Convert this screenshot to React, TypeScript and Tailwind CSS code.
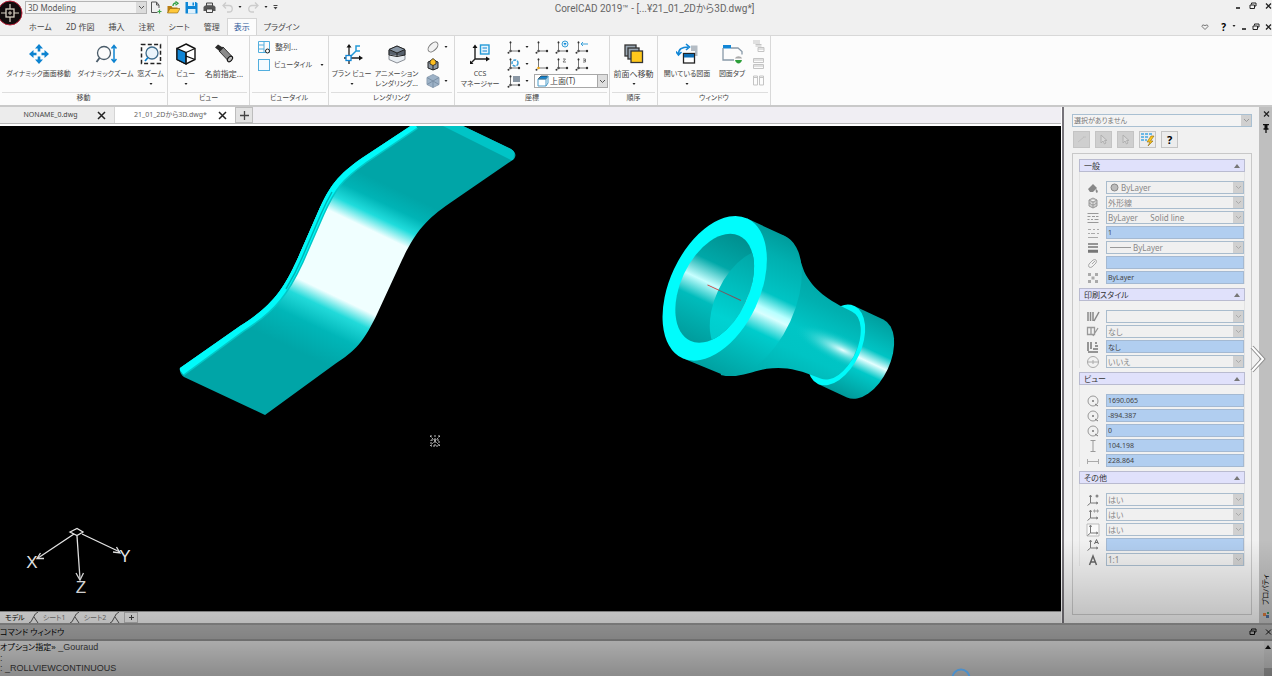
import type { ReactNode } from 'react';

const FONT = "font-['Noto_Sans','Noto_Sans_CJK_JP',sans-serif]";

type SvgProps = { size?: number; children: ReactNode };

const Svg = ({ size = 22, children }: SvgProps) => (
  <svg width={size} height={size} viewBox={`0 0 ${size} ${size}`} fill="none" className="shrink-0">
    {children}
  </svg>
);

/* ---------- ribbon icons ---------- */

const PanIcon = () => (
  <Svg>
    <path
      d="M11 1l4 4.500h-2.700v3h-2.600v-3H7zM11 21l4-4.500h-2.700v-3h-2.600v3H7zM1 11l4.500-4v2.700h3v2.600h-3V15zM21 11l-4.500-4v2.700h-3v2.600h3V15z"
      fill="#0d83d0"
    />
  </Svg>
);

const ZoomIcon = () => (
  <Svg>
    <circle cx="9" cy="10" r="6.500" stroke="#4a5c6a" strokeWidth="1.300" />
    <path d="M4.500 15L1.500 19" stroke="#4a5c6a" strokeWidth="1.800" />
    <path d="M19 3v15M16.500 5.500L19 2.500l2.500 3M16.500 16L19 19l2.500-3" stroke="#0d83d0" strokeWidth="1.500" />
  </Svg>
);

const ZoomWindowIcon = () => (
  <Svg>
    <rect x="1.500" y="1.500" width="19" height="19" stroke="#222" strokeWidth="1.500" strokeDasharray="4 2.300" />
    <circle cx="12" cy="10" r="6" fill="#eaf4fb" stroke="#3f6c8c" strokeWidth="1.300" />
    <path d="M8 14.500L5 18" stroke="#0d83d0" strokeWidth="1.800" />
  </Svg>
);

const CubeIcon = () => (
  <Svg>
    <path d="M11 1l9 4.500v11L11 21l-9-4.500v-11z" fill="#fff" stroke="#111" strokeWidth="1.400" />
    <path d="M2 5.500L11 9.500V21l-9-4.500z" fill="#1186d6" stroke="#111" strokeWidth="1.200" />
    <path d="M11 9.500l9-4M11 9.500V13l9 3.500M11 13v8" stroke="#111" strokeWidth="1.200" />
  </Svg>
);

const FlashlightIcon = () => (
  <Svg>
    <path d="M8 5.500l2-1.500 9 9.500-4 4L6 8z" fill="#8a8a8a" stroke="#333" />
    <path d="M2 4.500L5 1.500l5.500 3.500L7 8.500z" fill="#2a2a2a" />
    <ellipse cx="17" cy="16" rx="2" ry="3.200" transform="rotate(42 17 16)" fill="#bbb" stroke="#111" />
  </Svg>
);

const PlanViewIcon = () => (
  <Svg>
    <path d="M8 3v18M3 15h17" stroke="#222" strokeWidth="1.300" />
    <path d="M5.500 4.500L8 1l2.500 3.500zM18 12.500l4 2.500-4 2.500z" fill="#111" />
    <path d="M9 14l6-6M19 3h-4v5h4" stroke="#259bd8" strokeWidth="1.500" />
    <rect x="5" y="12.500" width="5" height="5" fill="#fff" stroke="#1186d6" strokeWidth="1.300" />
  </Svg>
);

const RenderIcon = () => (
  <Svg>
    <path d="M11 3l8 3.500v10L11 20l-8-3.500v-10z" fill="#e8edf2" stroke="#8a8f96" />
    <path d="M3 6.500L11 3l8 3.500v6l-8 0-8-1z" fill="#56606c" />
    <path d="M3 6.500L11 10l8-3.500L11 3z" fill="#8896a5" stroke="#222" />
    <path d="M11 10v3M3 7v5l8 1.500 8-1.500V7" stroke="#222" />
  </Svg>
);

const CcsIcon = () => (
  <Svg>
    <path d="M6 3v13h12M6 16l-4 4" stroke="#222" strokeWidth="1.400" />
    <path d="M3.500 5L6 1.500 8.500 5zM17 13.500l4 2.500-4 2.500zM1 17.500V21h3.500z" fill="#111" />
    <rect x="11.500" y="2" width="8.500" height="9" fill="#e7f5fd" stroke="#259bd8" strokeWidth="1.400" />
    <path d="M13.500 5h4.500M13.500 8h4.500" stroke="#1186d6" strokeWidth="1.200" />
  </Svg>
);

const OrderIcon = () => (
  <Svg>
    <rect x="2" y="2" width="11" height="11" fill="#9aa7b3" stroke="#333" strokeWidth="1.300" />
    <rect x="5" y="5" width="11" height="11" fill="#9aa7b3" stroke="#333" strokeWidth="1.300" />
    <rect x="8" y="8" width="11.500" height="11.500" fill="#ffc81c" stroke="#333" strokeWidth="1.300" />
  </Svg>
);

const OpenDrawingsIcon = () => (
  <Svg>
    <path d="M15 2.500h6.500V13H19V8h-4z" fill="#b4bcc4" />
    <path d="M2.500 11C2.500 6 6 4 12 4M10 1l3.500 3L10 7M0 8.500L2.500 12l3-3" stroke="#1186d6" strokeWidth="1.600" />
    <rect x="7.500" y="10.500" width="11" height="9.500" fill="#fff" stroke="#222" strokeWidth="1.300" />
    <rect x="8" y="11" width="10" height="3.500" fill="#0d6db4" />
  </Svg>
);

const DrawingTabIcon = () => (
  <Svg>
    <path d="M2 2h8v3.500H2z" fill="#1186d6" />
    <path d="M2 5v12h11M10 5h7l4 3.500v3" stroke="#8899a8" strokeWidth="1.300" />
    <path d="M14 15.500c1-3 6-3 7 0z" fill="#aaa" />
    <path d="M14 17c1 4.500 6 4.500 7 0z" fill="#2d9f3a" />
  </Svg>
);

const AxisIcon = ({ tint = '#555', mark }: { tint?: string; mark?: ReactNode }) => (
  <Svg size={14}>
    <path d="M3.500 1.500v9.500h9" stroke="#777" />
    <circle cx="3.500" cy="2.500" r="1" fill="#333" />
    <circle cx="3.500" cy="11" r="1.300" fill={tint} />
    <circle cx="12" cy="11" r="1.200" fill="#333" />
    <circle cx="1.500" cy="12.700" r="1" fill="#333" />
    {mark}
  </Svg>
);

/* ---------- ribbon parts ---------- */

const Caret = ({ className = '' }: { className?: string }) => (
  <svg width="4" height="3" viewBox="0 0 4 3" className={className}>
    <path d="M.5 0h3L2 2z" fill="#222" />
  </svg>
);

type BigButtonProps = {
  icon: ReactNode;
  label: string;
  label2?: string;
  arrow?: boolean;
  small?: boolean;
  className: string;
};

const BigButton = ({ icon, label, label2, arrow, small, className }: BigButtonProps) => (
  <button
    type="button"
    className={`flex h-full shrink-0 flex-col items-center pt-[7px] leading-[10px] whitespace-nowrap ${
      small ? 'text-[7px]' : 'text-[8px]'
    } ${className}`}
  >
    {icon}
    <span className="mt-1">{label}</span>
    {label2 && <span>{label2}</span>}
    {arrow && <Caret className="mt-1" />}
  </button>
);

type GroupProps = { title: string; className: string; children: ReactNode };

const Group = ({ title, className, children }: GroupProps) => (
  <section className={`flex shrink-0 flex-col border-r border-[#d9d9d9] ${className}`}>
    <div className="flex min-h-0 flex-1">{children}</div>
    <h2 className="mx-0.5 border-t border-[#dedede] pb-0.5 text-center text-[7px] leading-[10px]">{title}</h2>
  </section>
);

const IconButton = ({ label, children, arrow }: { label: string; children: ReactNode; arrow?: boolean }) => (
  <button type="button" aria-label={label} className="flex items-center gap-1">
    {children}
    {arrow && <Caret />}
  </button>
);

const Chevron = ({ color = '#555' }: { color?: string }) => (
  <svg width="7" height="5" viewBox="0 0 7 5" fill="none">
    <path d="M1 1l2.500 2.500L6 1" stroke={color} />
  </svg>
);

const WindowButtons = ({ className }: { className: string }) => (
  <div className={`flex items-center text-black ${className}`}>
    <button type="button" aria-label="最小化">
      <Svg size={8}><path d="M2 6h4" stroke="#111" strokeWidth="1.500" /></Svg>
    </button>
    <button type="button" aria-label="元に戻す">
      <Svg size={8}><path d="M2.500 2.500V1H7v3H5.500M1 3h4.500v3.500H1z" stroke="#222" /></Svg>
    </button>
    <button type="button" aria-label="閉じる">
      <Svg size={8}><path d="M2 1.500l5 5M7 1.500l-5 5" stroke="#222" strokeWidth="1.300" /></Svg>
    </button>
  </div>
);

/* ---------- title bar and menu ---------- */

const TitleBar = () => (
  <header className="grid h-[18px] shrink-0 grid-cols-[1fr_auto_1fr] items-center pl-[25px]">
    <div className="flex items-center self-start pt-px">
      <label className="flex h-[13px] w-[122px] items-center border border-[#b4b4b4] bg-[#f4f4f4]">
        <select aria-label="ワークスペース" className="min-w-0 flex-1 appearance-none px-0.5 text-[8px] leading-[11px] text-[#555]">
          <option>3D Modeling</option>
        </select>
        <span className="flex h-full w-2.5 items-center justify-center bg-[#dcdcdc]"><Chevron /></span>
      </label>
      <div className="flex items-center gap-[5px] pl-0.5">
        <button type="button" aria-label="新規">
          <Svg size={13}>
            <path d="M8.500 11.500h-6V1h5l2.500 3v3M7.500 1v3H10" stroke="#555" />
            <path d="M10.500 8.500v4M8.500 10.500h4" stroke="#3aa64a" strokeWidth="1.200" />
          </Svg>
        </button>
        <button type="button" aria-label="開く">
          <Svg size={13}>
            <path d="M0.500 12V5h4l1 1.500h5V12z" fill="#b97d12" />
            <path d="M0.500 12l2.500-4.500h10L10.500 12z" fill="#ffc83a" stroke="#8a6310" strokeWidth=".6" />
            <path d="M6 5c0-2 1-3 3-3M8.500 0.500l2.500 1.700-2.500 2" stroke="#2f9e44" strokeWidth="1.300" />
          </Svg>
        </button>
        <button type="button" aria-label="保存">
          <Svg size={13}>
            <path d="M0.500 1h10.500l1.500 1.500V12.500h-12z" fill="#0d86d6" />
            <path d="M3 1h7v4H3zM3 8h7.500v4.500H3z" fill="#dff1fc" />
            <path d="M7.500 1.500h1.500v3H7.500z" fill="#0d86d6" />
          </Svg>
        </button>
        <button type="button" aria-label="印刷">
          <Svg size={13}>
            <path d="M3.500 2h6v3h-6z" fill="#ddd" stroke="#444" />
            <path d="M2 4.500h9l1.500 1.500v4h-12V6z" fill="#555" />
            <path d="M3.500 8h6v3.500h-6z" fill="#eee" stroke="#444" />
          </Svg>
        </button>
        <button type="button" aria-label="元に戻す" className="flex items-center gap-1">
          <Svg size={13}><path d="M5 1.500L2 4.500l3 3M2.500 4.500H8a3 3 0 010 6.500H6" stroke="#ccc" strokeWidth="1.300" /></Svg>
          <Caret />
        </button>
        <button type="button" aria-label="やり直し" className="flex items-center gap-1">
          <Svg size={13}><path d="M8 1.500l3 3-3 3M10.500 4.500H5A3 3 0 005 11h2" stroke="#ccc" strokeWidth="1.300" /></Svg>
          <Caret />
        </button>
        <button type="button" aria-label="カスタマイズ">
          <Svg size={5}><path d="M0.500 0.500h4" stroke="#444" /><path d="M0.500 2h4l-2 2.500z" fill="#444" /></Svg>
        </button>
      </div>
    </div>
    <h1 className="pl-3 font-['Roboto','Noto_Sans_CJK_JP',sans-serif] text-[10px] leading-[14px] whitespace-nowrap text-[#666]">
      CorelCAD 2019™ - [...¥21_01_2Dから3D.dwg*]
    </h1>
    <WindowButtons className="justify-end gap-[7px] self-start pt-0.5" />
  </header>
);

const menuTabs = ['ホーム', '2D 作図', '挿入', '注釈', 'シート', '管理', '表示', 'プラグイン'];

const MenuTabs = () => (
  <nav className="flex h-[17px] shrink-0 items-stretch justify-between pl-[22px]">
    <div className="flex items-stretch">
      {menuTabs.map((tab) => (
        <button
          key={tab}
          type="button"
          className={`border border-b-0 px-[6px] text-[8px] leading-[16px] ${
            tab === '表示' ? 'border-[#d5d5d5] bg-[#fcfcfc] text-[#2b579a]' : 'border-transparent'
          }`}
        >
          {tab}
        </button>
      ))}
    </div>
    <div className="flex items-center gap-1">
      <button type="button" aria-label="お気に入り" className="pr-2">
        <Svg size={8}><path d="M4 6.500L1 3.500Q1 1.500 3 2l1 .8L5 2q2-.5 2 1.500z" stroke="#777" /></Svg>
      </button>
      <button type="button" aria-label="ヘルプ" className="flex items-center gap-1.5 text-[10px] leading-3 font-bold text-black">
        ?<Caret />
      </button>
      <WindowButtons className="gap-1" />
    </div>
  </nav>
);

const AppLogo = () => (
  <svg width="24" height="26" viewBox="0 0 24 26" fill="none" className="absolute top-0 left-0">
    <circle cx="10" cy="13" r="12" fill="#120c0d" stroke="#b9243c" />
    <path d="M10 4v18M1 13h18" stroke="#d8d2c4" strokeWidth="1.200" />
    <rect x="6" y="9" width="8" height="8" fill="#120c0d" stroke="#d8d2c4" strokeWidth="1.300" />
    <path d="M10 11v4M8 13h4" stroke="#d8d2c4" />
  </svg>
);

/* ---------- ribbon ---------- */

const Ribbon = () => (
  <div className="flex h-[72px] shrink-0 border-t border-b-2 border-t-[#d8d8d8] border-b-[#c9c9c9] bg-[#fcfcfc]">
    <Group title="移動" className="w-[168px]">
      <BigButton icon={<PanIcon />} label="ダイナミック画面移動" small className="w-[77px]" />
      <BigButton icon={<ZoomIcon />} label="ダイナミックズーム" small className="w-[57px]" />
      <BigButton icon={<ZoomWindowIcon />} label="窓ズーム" small arrow className="w-[33px]" />
    </Group>
    <Group title="ビュー" className="w-[82px]">
      <BigButton icon={<CubeIcon />} label="ビュー" small arrow className="w-[35px]" />
      <BigButton icon={<FlashlightIcon />} label="名前指定..." className="w-[42px]" />
    </Group>
    <Group title="ビュータイル" className="w-[79px]">
      <div className="flex flex-1 flex-col gap-1 pt-1 pr-1 pl-[7px]">
        <button type="button" className="flex items-center gap-1 text-[8px] leading-[14px]">
          <Svg size={14}>
            <path d="M1.500 1.500h11v11h-11zM7 1.500v11M1.500 5h5.500M1.500 9h5.500" stroke="#52aede" />
            <circle cx="10.500" cy="11" r="2" fill="#fff" stroke="#222" />
          </Svg>
          整列...
        </button>
        <button type="button" className="flex items-center gap-[3px] text-[7px] leading-[14px] whitespace-nowrap">
          <Svg size={14}><rect x="1.500" y="1.500" width="11" height="11" fill="#f4fbff" stroke="#52aede" /></Svg>
          ビュータイル
          <Caret className="ml-auto" />
        </button>
      </div>
    </Group>
    <Group title="レンダリング" className="w-[126px]">
      <BigButton icon={<PlanViewIcon />} label="プラン ビュー" small arrow className="w-[45px]" />
      <BigButton icon={<RenderIcon />} label="アニメーション" label2="レンダリング..." small className="w-[45px]" />
      <div className="flex flex-col gap-[3px] pt-1 pl-[7px]">
        <IconButton label="マテリアル" arrow>
          <Svg size={14}>
            <ellipse cx="7" cy="7" rx="6" ry="3.500" transform="rotate(-45 7 7)" fill="#f2f2f2" stroke="#777" />
          </Svg>
        </IconButton>
        <IconButton label="光源">
          <Svg size={14}>
            <path d="M2 5l5-2 5 2v6l-5 2-5-2z" fill="#8b95a0" stroke="#222" />
            <path d="M4 4l3-2.500L10 4v3L7 8.500 4 7z" fill="#ffbf1f" stroke="#222" strokeWidth=".8" />
            <path d="M7 8.500V13" stroke="#222" />
          </Svg>
        </IconButton>
        <IconButton label="環境" arrow>
          <Svg size={14}>
            <path d="M7 .5l6 3v7l-6 3-6-3v-7z" fill="#9db2c7" stroke="#8fa1b4" />
            <path d="M1 3.500l6 3.500 6-3.500M7 7v6.500M1 10.500L7 7l6 3.500" stroke="#7b90a6" />
          </Svg>
        </IconButton>
      </div>
    </Group>
    <Group title="座標" className="w-[155px]">
      <BigButton icon={<CcsIcon />} label="CCS" label2="マネージャー" small className="w-[50px]" />
      <div className="flex flex-1 flex-col gap-[3px] pt-1 pr-px pl-0.5">
        <div className="flex h-[14px] items-center gap-1.5">
          <IconButton label="CCS" arrow><AxisIcon /></IconButton>
          <IconButton label="CCS ワールド"><AxisIcon /></IconButton>
          <IconButton label="CCS ビュー">
            <AxisIcon
              mark={<><circle cx="10" cy="4" r="3" fill="#e3f4fc" stroke="#3aa0d8" /><path d="M8.500 3h3L10 5.500z" fill="#1186d6" /></>}
            />
          </IconButton>
          <IconButton label="CCS 前"><AxisIcon mark={<path d="M6 4h7M8 2L6 4l2 2" stroke="#3aa0d8" />} /></IconButton>
        </div>
        <div className="flex h-[14px] items-center gap-1.5">
          <IconButton label="CCS X" arrow>
            <AxisIcon mark={<circle cx="8" cy="6" r="3" stroke="#3aa0d8" strokeWidth="1.500" strokeDasharray="3 1" />} />
          </IconButton>
          <IconButton label="CCS 原点"><AxisIcon tint="#f0a818" /></IconButton>
          <IconButton label="CCS Z"><AxisIcon mark={<path d="M8 2h2.500L8 5h3" stroke="#777" />} /></IconButton>
          <IconButton label="CCS 3点"><AxisIcon mark={<path d="M8 2h2.500v3H8M8.500 3.500h2" stroke="#777" />} /></IconButton>
        </div>
        <div className="flex h-[14px] items-center gap-[5px]">
          <IconButton label="CCS 図形" arrow>
            <AxisIcon mark={<rect x="6" y="2" width="7" height="6" fill="#8a97a4" />} />
          </IconButton>
          <label className="flex h-[14px] flex-1 items-center border border-[#a8a8a8] bg-white pl-0.5">
            <Svg size={12}>
              <path d="M1 4l3-3h7L9 4z" fill="#1186d6" stroke="#222" strokeWidth=".7" />
              <path d="M1 4h8v7H1zM9 4l2-3v7L9 11" stroke="#4b9bc9" />
            </Svg>
            <select aria-label="CCS 面" className="min-w-0 flex-1 appearance-none px-px text-[8px] leading-[12px]">
              <option>上面(T)</option>
            </select>
            <span className="flex h-full w-2.5 items-center justify-center border-l border-[#a8a8a8] bg-[#dedede]"><Chevron /></span>
          </label>
        </div>
      </div>
    </Group>
    <Group title="順序" className="w-[48px]">
      <BigButton icon={<OrderIcon />} label="前面へ移動" arrow className="w-[47px]" />
    </Group>
    <Group title="ウィンドウ" className="w-[113px]">
      <BigButton icon={<OpenDrawingsIcon />} label="開いている図面" small arrow className="w-[58px]" />
      <BigButton icon={<DrawingTabIcon />} label="図面タブ" small className="w-[32px]" />
      <div className="flex flex-col gap-1 pt-1 pl-1">
        <IconButton label="重ねて表示">
          <Svg size={13}><path d="M1 1h7M1 3h7M3.500 4.500h6M3.500 6h6M6 7.500h6v4H6zM6 9h6" stroke="#c4c4c4" /></Svg>
        </IconButton>
        <IconButton label="上下に並べる">
          <Svg size={13}><path d="M1.500 1.500h10v4h-10zM1.500 7.500h10v4h-10zM1.500 3h10M1.500 9h10" stroke="#c4c4c4" /></Svg>
        </IconButton>
        <IconButton label="左右に並べる">
          <Svg size={13}><path d="M1.500 2h4v9h-4zM7.500 2h4v9h-4zM1.500 3.500h4M7.500 3.500h4" stroke="#c4c4c4" /></Svg>
        </IconButton>
      </div>
    </Group>
  </div>
);

/* ---------- drawing area ---------- */

const TabClose = () => (
  <Svg size={9}><path d="M1 1l7 7M8 1L1 8" stroke="#222" strokeWidth="1.500" /></Svg>
);

const DocumentTabs = () => (
  <div className="h-[19px] shrink-0 border-b-2 border-white">
    <div className="flex h-[17px] border-b border-[#b9b9b9] bg-[#f0eef3]">
      <div className="flex w-[115px] items-center border-r border-[#d5d5d5] bg-[#ececec] text-[7px]">
        <button type="button" className="flex-1 pl-1 text-[#444]">NONAME_0.dwg</button>
        <button type="button" aria-label="NONAME_0.dwg を閉じる" className="pr-2"><TabClose /></button>
      </div>
      <div className="flex w-[120px] items-center bg-white text-[7px]">
        <button type="button" className="flex-1 pl-2 text-[#666]">21_01_2Dから3D.dwg*</button>
        <button type="button" aria-label="21_01_2Dから3D.dwg を閉じる" className="pr-2"><TabClose /></button>
      </div>
      <button type="button" aria-label="新しいタブ" className="flex w-[18px] items-center justify-center border border-[#bdbdbd] bg-[#e3e3e3]">
        <Svg size={9}><path d="M4.500 0v9M0 4.500h9" stroke="#444" strokeWidth="1.300" /></Svg>
      </button>
    </div>
  </div>
);

const SHEET = 'M180 368L240 326C272 306 283 290 297 260L318 212C330 185 338 175 362 158L412 125H461L511 149Q518 154 514 159L450 203C425 220 415 233 402 260L378 312C364 342 355 351 335 364L265 415L184 377Q179 373 180 368Z';
const SHEET_EDGE = 'M180 370L240 326C272 306 283 290 297 260L318 212C330 185 338 175 362 158L414 123';

const Viewport = () => (
  <main className="min-h-0 flex-1 overflow-hidden bg-black">
    <svg viewBox="0 126 1061 485" preserveAspectRatio="xMinYMin meet" className="h-full w-full">
      <defs>
        <linearGradient id="sheet" gradientUnits="userSpaceOnUse" x1="0" y1="0" x2="-129" y2="270">
          <stop offset="0" stopColor="#00a5a7" />
          <stop offset=".06" stopColor="#00b4b6" />
          <stop offset=".11" stopColor="#20dcdc" />
          <stop offset=".16" stopColor="#f0ffff" />
          <stop offset=".41" stopColor="#f0ffff" />
          <stop offset=".46" stopColor="#22dada" />
          <stop offset=".53" stopColor="#00b6b8" />
          <stop offset=".63" stopColor="#00a5a7" />
        </linearGradient>
        <linearGradient id="body" gradientUnits="userSpaceOnUse" x1="0" y1="-77" x2="0" y2="77">
          <stop offset="0" stopColor="#009c9c" />
          <stop offset=".15" stopColor="#00b0b0" />
          <stop offset=".38" stopColor="#00c4c4" />
          <stop offset=".48" stopColor="#b8ffff" />
          <stop offset=".52" stopColor="#d8ffff" />
          <stop offset=".64" stopColor="#00cccc" />
          <stop offset="1" stopColor="#00a0a0" />
        </linearGradient>
        <linearGradient id="pipe" gradientUnits="userSpaceOnUse" x1="0" y1="-43" x2="0" y2="43">
          <stop offset="0" stopColor="#009e9e" />
          <stop offset=".38" stopColor="#00c4c4" />
          <stop offset=".52" stopColor="#e4ffff" />
          <stop offset=".66" stopColor="#00c8c8" />
          <stop offset="1" stopColor="#009a9a" />
        </linearGradient>
        <linearGradient id="cone" gradientUnits="userSpaceOnUse" x1="0" y1="-77" x2="0" y2="77">
          <stop offset="0" stopColor="#009c9c" />
          <stop offset=".3" stopColor="#00b0b0" />
          <stop offset=".5" stopColor="#00c6c6" />
          <stop offset=".65" stopColor="#00c4c4" />
          <stop offset="1" stopColor="#00a4a4" />
        </linearGradient>
        <radialGradient id="glow" gradientUnits="userSpaceOnUse" cx="0" cy="0" r="1" gradientTransform="translate(142 2) scale(52 14)">
          <stop offset="0" stopColor="#eaffff" />
          <stop offset="1" stopColor="#00c8c8" stopOpacity="0" />
        </radialGradient>
        <linearGradient id="bore" gradientUnits="userSpaceOnUse" x1="0" y1="-58" x2="0" y2="58">
          <stop offset="0" stopColor="#008f8f" />
          <stop offset=".3" stopColor="#00a8a8" />
          <stop offset=".48" stopColor="#c8ffff" />
          <stop offset=".64" stopColor="#00bcbc" />
          <stop offset="1" stopColor="#009c9c" />
        </linearGradient>
        <linearGradient id="throat" gradientUnits="userSpaceOnUse" x1="0" y1="-58" x2="0" y2="58">
          <stop offset="0" stopColor="#00a0a0" />
          <stop offset=".7" stopColor="#00d2d2" />
          <stop offset="1" stopColor="#00c8c8" />
        </linearGradient>
        <clipPath id="sheetClip"><path d={SHEET} /></clipPath>
        <clipPath id="boreClip"><ellipse rx="34" ry="58" /></clipPath>
      </defs>

      <path d={SHEET} fill="url(#sheet)" />
      <g clipPath="url(#sheetClip)" fill="none">
        <path d="M441 125H463L515 150 513 161Z" fill="#00c4c6" />
        <path d={SHEET_EDGE} stroke="#00c8c8" strokeWidth="14" />
        <path d={SHEET_EDGE} stroke="#00fafa" strokeWidth="11" />
        <path d="M286 289C292 279 296 272 302 258L321 214C325 205 328 199 332 192" stroke="#00b4b4" strokeWidth="1.500" />
      </g>

      <g transform="translate(714.700 288.300) rotate(25)">
        <path d="M134-43H166A25 43 0 01166 43H134Z" fill="url(#pipe)" />
        <ellipse cx="134" rx="25" ry="43" fill="#00fafa" />
        <path d="M40-77C54-76 63-64 74-53C90-40 108-37 134-37A21 37 0 01134 37C108 38 95 42 81 51C68 60 60 72 42 76Z" fill="url(#cone)" />
        <path d="M80 0C90-14 120-16 153-14A21 37 0 01152 18C120 18 92 14 80 0Z" fill="url(#glow)" />
        <path d="M0-77H41A41 76 0 0142 75L0 77Z" fill="url(#body)" />
        <ellipse rx="45" ry="77" fill="#00fcfc" />
        <ellipse rx="34" ry="58" fill="url(#bore)" />
        <ellipse cx="38" rx="34" ry="58" fill="url(#throat)" clipPath="url(#boreClip)" />
        <path d="M-8 0H5" stroke="#d04848" />
        <path d="M5 0H29" stroke="#7a5560" />
      </g>

      <g stroke="#e6e6e6" strokeWidth="1.300" fill="none">
        <path d="M70 532l7-3.500 6 3.500-6 3.500zM74 534L38 558M82 534l38 18M77 536l3 43" />
        <path d="M44 558.500h-7l3.500-5.500M113 552l7 1-3.500-6M76 573l4 7 3.500-7" />
      </g>
      <g fill="#eee" className="font-['Liberation_Sans',sans-serif] text-[17px]" textAnchor="middle">
        <text x="32" y="568">X</text>
        <text x="125" y="562">Y</text>
        <text x="81" y="593">Z</text>
      </g>
      <path
        d="M430 436l10 10M440 436l-10 10M431 440h8v6h-8zM430 436h2M434 436h2M438 436h2M435 438v8"
        stroke="#bbb"
        fill="none"
        strokeDasharray="2 1"
      />
    </svg>
  </main>
);

const Slash = () => (
  <svg width="12" height="11" viewBox="0 0 12 11" fill="none" className="mx-[3px] shrink-0">
    <path d="M1 11Q3 11 5 6T10 0" stroke="#555" />
    <path d="M6 5l4 6" stroke="#555" />
  </svg>
);

const SheetTabs = () => (
  <div className="flex h-3 shrink-0 items-stretch border-t border-[#999] bg-[#eee] text-[7px] leading-[11px] text-[#777]">
    <button type="button" className="pl-[5px] text-black">モデル</button>
    <Slash />
    <button type="button">シート1</button>
    <Slash />
    <button type="button">シート2</button>
    <Slash />
    <button type="button" aria-label="シートを追加" className="flex w-3.5 items-center justify-center border border-[#bbb]">
      <Svg size={5}><path d="M2.500 0v5M0 2.500h5" stroke="#444" /></Svg>
    </button>
  </div>
);

/* ---------- property panel ---------- */

type Row = { name: string; icon: ReactNode; value: string; kind: 'select' | 'input'; lead?: ReactNode };

const centerIcon = (
  <>
    <circle cx="7" cy="7" r="5" stroke="#999" />
    <path d="M7 6v2M6 7h2M9 10l3 2" stroke="#777" />
  </>
);

const axisMark = <path d="M4.500 3v7h6M4.500 10l-3 2.500M3.500 4l1-2 1 2M10 9l2 1-2 1" stroke="#777" />;

const sections: { title: string; rows: Row[] }[] = [
  {
    title: '一般',
    rows: [
      {
        name: '色', kind: 'select', value: 'ByLayer',
        icon: <path d="M2 8l5-5 4 4-4 4H4zM10 8q3 2 1 4-2-1-1-4z" fill="#888" />,
        lead: <Svg size={9}><circle cx="4.500" cy="4.500" r="3.500" fill="#bbb" stroke="#888" /></Svg>,
      },
      {
        name: '画層', kind: 'select', value: '外形線',
        icon: <path d="M3 4l4-2 4 2v6l-4 2-4-2zM3 4l4 2 4-2M3 7l4 2 4-2M7 6v6" fill="#ccc" stroke="#999" />,
      },
      { name: '線種', kind: 'select', value: 'ByLayer\u00a0\u00a0\u00a0\u00a0\u00a0\u00a0Solid line', icon: <path d="M1.500 2.500h11M1.500 5.500h3M6 5.500h3M10 5.500h2.500M1.500 8.500h2M5 8.500h2M8.500 8.500h4M1.500 11.500h11" stroke="#999" /> },
      { name: '線種尺度', kind: 'input', value: '1', icon: <path d="M2 3.500h3M7 3.500h2M11 3.500h2M2 7.500h2M5 7.500h4M11 7.500h2M2 11.500h10" stroke="#aaa" /> },
      {
        name: '線の太さ', kind: 'select', value: 'ByLayer',
        icon: <path d="M2 3h10M2 6h10M2 9.500h10M2 11h10" stroke="#777" strokeWidth="1.500" />,
        lead: <span className="h-px w-[21px] bg-[#999]" />,
      },
      { name: 'リンク', kind: 'input', value: '', icon: <path d="M3 8l4-4q2-1 3 0t0 3l-4 4q-2 1-3 0t0-3zM6 8l3-3" stroke="#aaa" /> },
      { name: '透過性', kind: 'input', value: 'ByLayer', icon: <path d="M2 2h3v3H2zM9 2h3v3H9zM5.500 5.500h3v3h-3zM2 9h3v3H2zM9 9h3v3H9z" fill="#aaa" /> },
    ],
  },
  {
    title: '印刷スタイル',
    rows: [
      { name: '印刷スタイル', kind: 'select', value: '', icon: <path d="M2 2v9M4.500 2v9M7 2v9M8 11l5-9" stroke="#888" strokeWidth="1.500" /> },
      { name: '印刷スタイル テーブル', kind: 'select', value: 'なし', icon: <path d="M1.500 2.500h7v7h-7zM5 2v8M7 11l5-8" stroke="#999" strokeWidth="1.300" /> },
      { name: '印刷テーブルの適用先', kind: 'input', value: 'なし', icon: <path d="M2 2v9M5 2v7M2 12h10M7 9h5M9 6h3M9 3h2" stroke="#777" strokeWidth="1.500" /> },
      { name: '印刷テーブルのタイプ', kind: 'select', value: 'いいえ', icon: <path d="M7 1.500a5 5 0 110 11 5 5 0 010-11zM1 7h12M7 5v4" stroke="#aaa" /> },
    ],
  },
  {
    title: 'ビュー',
    rows: [
      { name: '中心 X', kind: 'input', value: '1690.065', icon: centerIcon },
      { name: '中心 Y', kind: 'input', value: '-894.387', icon: centerIcon },
      { name: '中心 Z', kind: 'input', value: '0', icon: centerIcon },
      { name: '高さ', kind: 'input', value: '104.198', icon: <path d="M4.500 1.500h5M7 1.500v11M4.500 12.500h5" stroke="#999" /> },
      { name: '幅', kind: 'input', value: '228.864', icon: <path d="M1.500 5v5M1.500 7.500h11M12.500 5v5" stroke="#aaa" /> },
    ],
  },
  {
    title: 'その他',
    rows: [
      { name: 'CCS アイコン', kind: 'select', value: 'はい', icon: <>{axisMark}<circle cx="11" cy="3" r="1.500" fill="#888" /></> },
      { name: 'CCS アイコン原点', kind: 'select', value: 'はい', icon: <>{axisMark}<path d="M8 2h1v2H8zM11 2h1v2h-1z" stroke="#999" /></> },
      { name: 'ビューごとの CCS', kind: 'select', value: 'はい', icon: <><path d="M1 1h12v12H1z" fill="#fafafa" stroke="#bbb" />{axisMark}</> },
      { name: 'CCS 名', kind: 'input', value: '', icon: <>{axisMark}<path d="M8.500 6l2-4.500 2 4.500M9 4.500h3" stroke="#666" /></> },
      { name: '注釈尺度', kind: 'select', value: '1:1', icon: <path d="M3.500 12L7 3l3.500 9M5 9h4" stroke="#666" strokeWidth="1.500" /> },
    ],
  },
];

const PropertyRow = ({ row }: { row: Row }) => (
  <label className="flex h-[13px] items-center">
    <span className="flex w-[26px] shrink-0 justify-center"><Svg size={14}>{row.icon}</Svg></span>
    {row.kind === 'input' ? (
      <input
        aria-label={row.name}
        defaultValue={row.value}
        className="h-full min-w-0 flex-1 border border-[#a4b9d2] bg-[#b1cef0] px-px text-[7px] leading-[11px] text-[#444]"
      />
    ) : (
      <span className="flex h-full min-w-0 flex-1 items-center border border-[#a9bccd] bg-[#f0f0f0] pl-px">
        {row.lead && <span className="mx-0.5 flex items-center">{row.lead}</span>}
        <select aria-label={row.name} className="min-w-0 flex-1 appearance-none text-[8px] leading-[11px] text-[#888]">
          <option>{row.value}</option>
        </select>
        <span className="flex h-full w-2.5 items-center justify-center bg-[#d0d0d0]"><Chevron color="#aaa" /></span>
      </span>
    )}
  </label>
);

const SelectTool = () => (
  <Svg size={13}><path d="M4 2v8l2-2 1.500 3 1.500-1-1.500-2.500H10z" fill="#d8d8d8" stroke="#b0b0b0" /></Svg>
);

const toolButton = 'flex h-[17px] w-[17px] items-center justify-center border';

const PropertyPanel = () => (
  <aside className="flex w-[210px] shrink-0 border-l-2 border-[#77747a] bg-[#f1f1f1]">
    <div className="flex flex-1 flex-col pt-[7px] pr-[7px] pb-2 pl-2">
      <label className="flex h-[13px] shrink-0 items-center border border-[#a9c0d2] bg-[#f4f4f4] pl-px">
        <select aria-label="選択" className="min-w-0 flex-1 appearance-none text-[7px] leading-[11px] text-[#777]">
          <option>選択がありません</option>
        </select>
        <span className="flex h-full w-2.5 items-center justify-center bg-[#d0d0d0]"><Chevron color="#999" /></span>
      </label>
      <div className="flex shrink-0 gap-[5px] pt-1 pb-[5px] pl-px">
        <button type="button" aria-label="選択" className={`${toolButton} border-[#c4c4c4] bg-[#cfcfcf]`}>
          <Svg size={13}><path d="M3 9l6-5M8 4h3" stroke="#c0c0c0" /></Svg>
        </button>
        <button type="button" aria-label="図形を選択" className={`${toolButton} border-[#c4c4c4] bg-[#cfcfcf]`}><SelectTool /></button>
        <button type="button" aria-label="選択に追加" className={`${toolButton} border-[#c4c4c4] bg-[#cfcfcf]`}><SelectTool /></button>
        <button type="button" aria-label="スマート選択" className={`${toolButton} border-[#c4c4c4] bg-[#ececec]`}>
          <Svg size={15}>
            <path d="M1 2h3M5 2h3M9 2h3M1 5h3M5 5h3M1 8h3M5 8h2" stroke="#6cb8e6" strokeWidth="2" />
            <path d="M11 4l-4 6h3l-2 4 5-5h-2.500L14 4z" fill="#ffc81c" stroke="#8c6a10" strokeWidth=".6" />
          </Svg>
        </button>
        <button type="button" aria-label="ヘルプ" className={`${toolButton} border-[#c4c4c4] bg-[#ececec] text-[11px] leading-none font-bold text-black`}>?</button>
      </div>
      <div className="flex min-h-0 flex-1 flex-col gap-1 overflow-hidden border border-[#c8c8c8] px-1.5 pt-[5px]">
        {sections.map((section) => (
          <section key={section.title} className="border-x border-[#e2e2e2]">
            <button
              type="button"
              className="-mx-px flex h-[13px] w-[calc(100%+2px)] items-center justify-between border border-[#b9bbd0] bg-[#e0e1fb] px-1 text-[8px] leading-[11px] text-[#333]"
            >
              {section.title}
              <svg width="6" height="4" viewBox="0 0 6 4"><path d="M0 4h6L3 0z" fill="#777" /></svg>
            </button>
            <div className="flex flex-col gap-0.5 pt-[9px]">
              {section.rows.map((row) => <PropertyRow key={row.name} row={row} />)}
            </div>
          </section>
        ))}
      </div>
    </div>
    <div className="flex w-[13px] shrink-0 flex-col items-center bg-[#bfbfbf] pt-[3px] text-black">
      <button type="button" aria-label="閉じる">
        <Svg size={8}><path d="M2 1.500l5 5M7 1.500l-5 5" stroke="#222" strokeWidth="1.200" /></Svg>
      </button>
      <button type="button" aria-label="ピン留め" className="mt-1.5">
        <Svg size={9}><path d="M2 .7h6M2.500 5h5M5 5v4" stroke="#111" strokeWidth="1.300" /><path d="M3.500 1h3v4h-3z" fill="#111" /></Svg>
      </button>
      <span className="mt-auto rotate-180 text-[7px] leading-[10px] whitespace-nowrap [writing-mode:vertical-rl] [text-orientation:sideways]">
        プロパティ
      </span>
      <span className="mt-1.5 mb-1">
        <Svg size={8}><path d="M1 2h3v3H1z" fill="#d0753a" /><path d="M4 4h3v3H4z" fill="#4a6b9a" /><path d="M5 1h2v2H5z" fill="#3a8a60" /></Svg>
      </span>
    </div>
  </aside>
);

/* ---------- command window ---------- */

const CommandWindow = () => (
  <footer className="shrink-0 border-t-2 border-[#999]">
    <div className="flex h-[16px] items-center justify-between border-b-2 border-[#9a9a9a] bg-[#b5b5b5] text-[8px] text-black">
      <h2>コマンド ウィンドウ</h2>
      <div className="flex gap-[7px]">
        <button type="button" aria-label="フロート">
          <Svg size={8}><path d="M2.500 2.500V1H7v3H5.500M1 3h4.500v3.500H1z" stroke="#111" /></Svg>
        </button>
        <button type="button" aria-label="閉じる">
          <Svg size={8}><path d="M2 1.500l5 5M7 1.500l-5 5" stroke="#111" /></Svg>
        </button>
      </div>
    </div>
    <div className="flex h-[35px] justify-between bg-[#f0f0f0]">
      <div className="pt-px font-['Liberation_Sans','Noto_Sans_CJK_JP',sans-serif] text-[9px] leading-[10px] text-[#444]">
        <p><span className="text-[8px] text-black">オプション指定»</span> _Gouraud</p>
        <p>:</p>
        <p>: _ROLLVIEWCONTINUOUS</p>
      </div>
      <div className="flex w-2 flex-col items-center bg-[#e6e6e6] pt-1">
        <svg width="6" height="4" viewBox="0 0 6 4"><path d="M0 4h6L3 0z" fill="#111" /></svg>
        <span className="mt-auto h-2 w-full bg-[#bbb]" />
      </div>
    </div>
  </footer>
);

const App = () => (
  <div
    lang="ja"
    className={`relative flex h-screen flex-col overflow-hidden bg-[#f0f0f0] text-[#444] [font-feature-settings:'palt'] ${FONT}`}
  >
    <TitleBar />
    <MenuTabs />
    <AppLogo />
    <Ribbon />
    <div className="flex min-h-0 flex-1">
      <div className="flex min-w-0 flex-1 flex-col border-r border-white">
        <DocumentTabs />
        <Viewport />
        <SheetTabs />
      </div>
      <PropertyPanel />
    </div>
    <CommandWindow />

    {/* player overlay: bottom shade, next arrow and loading ring */}
    <div className="pointer-events-none absolute inset-x-0 bottom-0 h-[136px] bg-linear-to-b from-transparent via-black/20 via-57% to-black/42" />
    <button type="button" aria-label="次へ" className="absolute top-[345px] right-[6px]">
      <svg width="16" height="28" viewBox="0 0 16 28" fill="none">
        <path d="M2 2l11 12L2 26" stroke="#8d8d8d" strokeWidth="4" />
        <path d="M2 2l11 12L2 26" stroke="#fff" strokeWidth="2" />
      </svg>
    </button>
    <svg width="20" height="8" viewBox="0 0 20 8" fill="none" className="absolute right-[301px] bottom-0">
      <circle cx="10" cy="10" r="8.500" stroke="#4b8fcb" strokeWidth="2" />
    </svg>
  </div>
);

export default App;
